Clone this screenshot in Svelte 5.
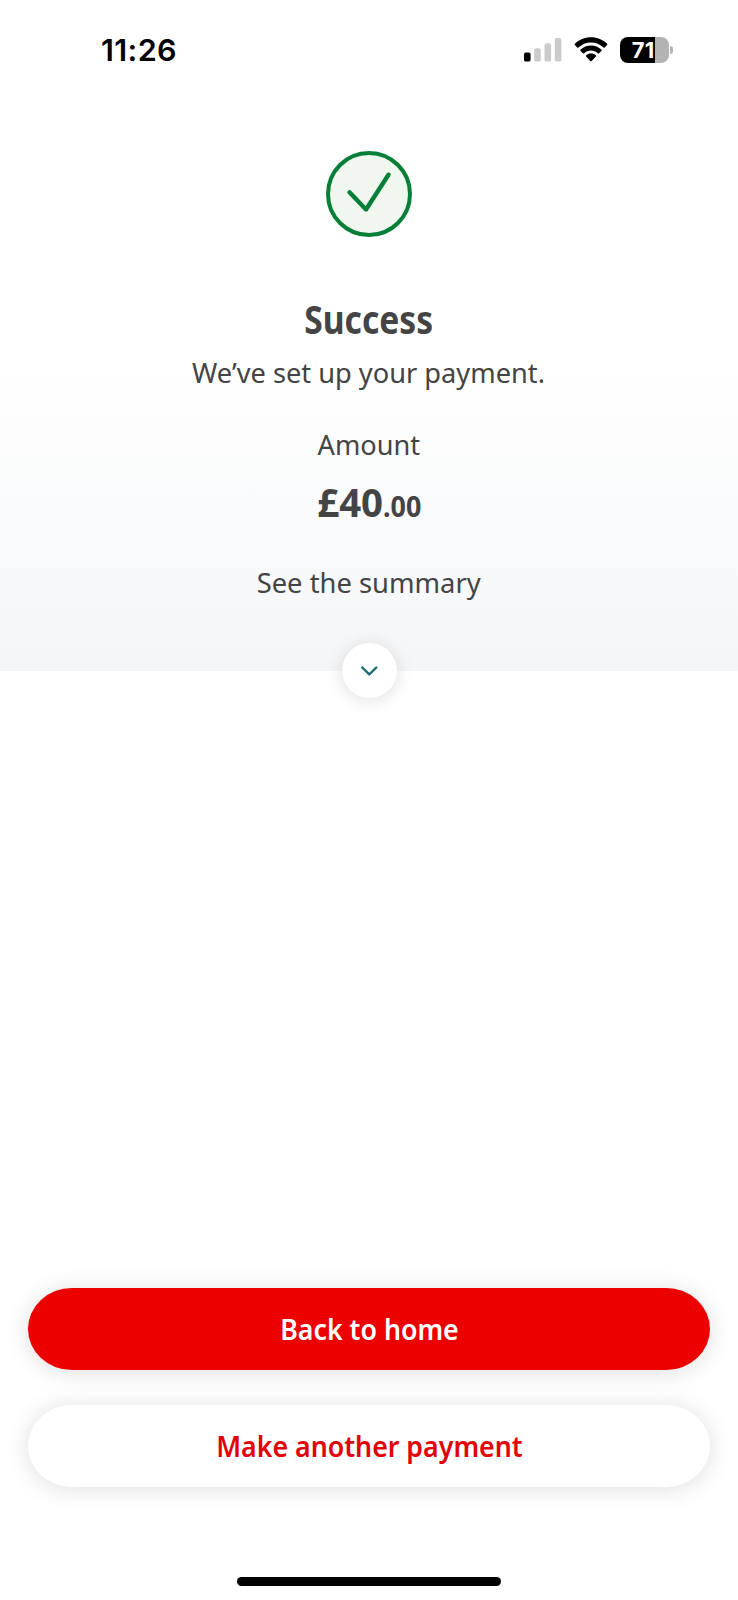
<script>
  const bars = [
    { x: 0, y: 14.5, on: true },
    { x: 10.2, y: 10.3, on: false },
    { x: 20.5, y: 5.2, on: false },
    { x: 30.8, y: 0, on: false }
  ];
</script>

<main class="screen">
  <header class="status">
    <span class="time">11:26</span>
    <div class="indicators">
      <svg class="signal" width="38" height="24" viewBox="0 0 38 24">
        {#each bars as bar}
          <rect x={bar.x} y={bar.y} width="6.6" height={23.6 - bar.y} rx="1.9" fill={bar.on ? '#000' : '#cbcbcb'} />
        {/each}
      </svg>
      <svg class="wifi" width="34" height="25" viewBox="0 0 34 25">
        <path d="M17 0.3C23.3 0.3 29 2.8 33.1 6.8C33.5 7.2 33.5 7.7 33.1 8.1L30.8 10.4C30.4 10.8 29.9 10.8 29.5 10.4C26.2 7.3 21.8 5.4 17 5.4C12.2 5.4 7.8 7.3 4.5 10.4C4.1 10.8 3.6 10.8 3.2 10.4L0.9 8.1C0.5 7.7 0.5 7.2 0.9 6.8C5 2.8 10.7 0.3 17 0.3Z" />
        <path d="M17 8.5C21 8.5 24.7 10.1 27.4 12.6C27.8 13 27.8 13.5 27.4 13.9L25.1 16.2C24.7 16.6 24.2 16.6 23.8 16.2C22 14.6 19.6 13.6 17 13.6C14.4 13.6 12 14.6 10.2 16.2C9.8 16.6 9.3 16.6 8.9 16.2L6.6 13.9C6.2 13.5 6.2 13 6.6 12.6C9.3 10.1 13 8.5 17 8.5Z" />
        <path d="M17 16.6C19 16.6 20.6 17.2 21.9 18.3C22.3 18.7 22.3 19.2 21.9 19.6L17.7 23.9C17.3 24.3 16.7 24.3 16.3 23.9L12.1 19.6C11.7 19.2 11.7 18.7 12.1 18.3C13.4 17.2 15 16.6 17 16.6Z" />
      </svg>
      <div class="battery">
        <div class="cell"><span>71</span></div>
        <i class="nub"></i>
      </div>
    </div>
  </header>

  <section class="hero">
    <svg class="tick" width="86" height="86" viewBox="0 0 86 86" fill="none" stroke="#057f37" stroke-width="4">
      <circle cx="43" cy="43" r="41" fill="#eff7ef" />
      <path d="M23.5 41.3L40 58.5L62.5 23.7" stroke-width="4.4" stroke-linecap="round" stroke-linejoin="round" />
    </svg>
    <h1><span>Success</span></h1>
    <p class="message"><span>We’ve set up your payment.</span></p>
    <p class="label"><span>Amount</span></p>
    <p class="amount"><span class="whole">£40</span><span class="pence">.00</span></p>
    <p class="summary"><span>See the summary</span></p>
    <button class="expand" aria-label="Expand">
      <svg width="17" height="10" viewBox="0 0 17 10" fill="none" stroke="#176f73" stroke-width="2.4" stroke-linecap="round" stroke-linejoin="round">
        <path d="M1.3 1.5L8.3 8.4L15.3 1.5" />
      </svg>
    </button>
  </section>

  <footer class="actions">
    <button class="primary"><span>Back to home</span></button>
    <button class="secondary"><span>Make another payment</span></button>
    <div class="home"></div>
  </footer>
</main>

<style>
  :global(body) { margin: 0; background: #fff; }
  .screen {
    width: 738px;
    height: 1600px;
    display: flex;
    flex-direction: column;
    justify-content: space-between;
    background: linear-gradient(#fff 360px, #f4f6f8 671px, #fff 671px);
    font-family: "Noto Sans", "Open Sans", sans-serif;
    color: #444;
    position: relative;
    overflow: hidden;
  }
  .status {
    height: 100px;
    box-sizing: border-box;
    padding: 37px 65px 0 101px;
    display: flex;
    justify-content: space-between;
    align-items: flex-start;
  }
  .time {
    font: 600 30.5px/26px Inter, sans-serif;
    letter-spacing: 0.4px;
    color: #000;
  }
  .indicators { display: flex; align-items: flex-start; }
  .signal { margin: 1px 12px 0 0; }
  .wifi { margin-right: 12px; }
  .battery { display: flex; align-items: center; gap: 1px; }
  .cell {
    width: 49px;
    height: 26px;
    box-sizing: border-box;
    padding-right: 3px;
    border-radius: 8px;
    background: linear-gradient(90deg, #000 35px, #b3b3b3 35px);
    color: #fff;
    font: 700 22px/26px Inter, sans-serif;
    letter-spacing: 0;
    text-align: center;
  }
  .nub { width: 3px; height: 8px; border-radius: 0 4px 4px 0; background: #b3b3b3; }
  .hero {
    height: 598px;
    flex: none;
    box-sizing: border-box;
    padding-top: 51px;
    display: flex;
    flex-direction: column;
    align-items: center;
    margin-bottom: auto;
  }
  .tick { flex: none; }
  h1, p {
    flex: none;
    height: 40px;
    margin: 0;
    font-size: 28px;
    line-height: 40px;
    font-weight: 400;
    white-space: nowrap;
  }
  h1 span, p span, .actions span { display: inline-block; }
  h1 { height: 56px; font-size: 40px; line-height: 56px; font-weight: 700; margin-top: 54px; }
  h1 span { transform: scaleX(0.84); }
  .message { margin-top: 5px; }
  .message span { transform: scaleX(0.972); }
  .label { margin-top: 32px; }
  .label span { transform: scaleX(0.97); }
  .amount {
    height: 56px;
    margin-top: 10px;
    font-size: 40px;
    line-height: 56px;
    font-weight: 700;
    display: flex;
    align-items: baseline;
    transform: scaleX(0.96);
  }
  .pence { font-size: 28px; line-height: 40px; font-weight: 700; }
  .summary { margin-top: 32px; }
  .summary span { transform: scaleX(0.977); }
  .expand {
    width: 55px;
    height: 55px;
    flex: none;
    padding: 0;
    margin-top: 41px;
    border: 0;
    border-radius: 50%;
    background: #fff;
    box-shadow: 0 2px 18px rgba(0, 0, 0, 0.13);
    display: flex;
    align-items: center;
    justify-content: center;
  }
  .actions {
    padding: 0 28px 14px;
    display: flex;
    flex-direction: column;
    align-items: center;
  }
  .actions button {
    width: 682px;
    height: 82px;
    padding: 0 0 1px;
    border: 0;
    border-radius: 44px / 41px;
    font: 600 28px/40px "Noto Sans", "Open Sans", sans-serif;
    box-shadow: 0 2px 24px rgba(0, 0, 0, 0.13);
  }
  .actions button span { transform: scaleX(0.955); }
  .actions .primary { background: #ec0000; color: #fff; margin-bottom: 35px; }
  .actions .secondary { background: #fff; color: #e20208; margin-bottom: 90px; }
  .home { width: 264px; height: 9px; border-radius: 5px; background: #000; }
</style>
